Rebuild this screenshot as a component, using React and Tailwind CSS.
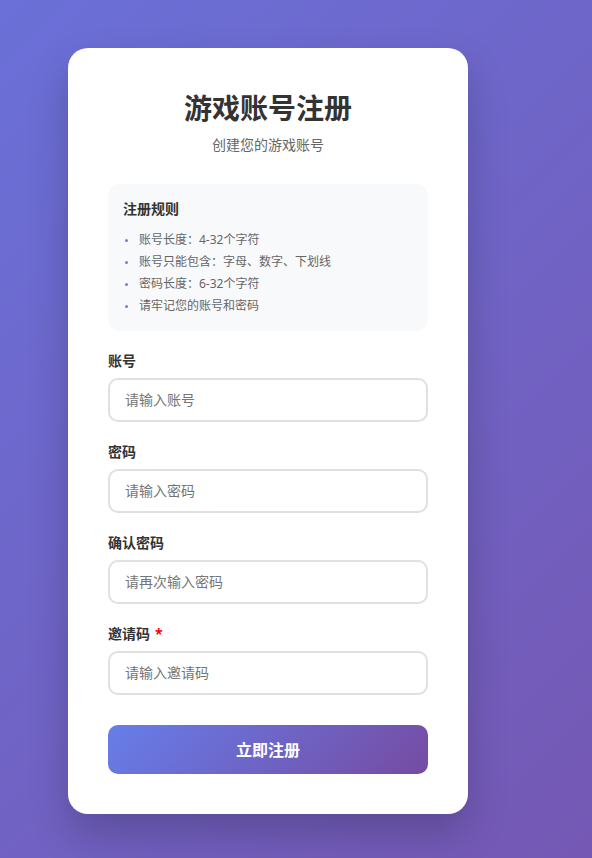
import React, { useState } from 'react';

const rules = [
  "账号长度：4-32个字符",
  "账号只能包含：字母、数字、下划线",
  "密码长度：6-32个字符",
  "请牢记您的账号和密码"
];

const fields = [
  { label: "账号", placeholder: "请输入账号", type: "text" },
  { label: "密码", placeholder: "请输入密码", type: "password" },
  { label: "确认密码", placeholder: "请再次输入密码", type: "password" },
  { label: "邀请码", placeholder: "请输入邀请码", type: "text", required: true },
];

export default function App() {
  const [values, setValues] = useState({});

  return (
    <div
      className="min-h-screen bg-[linear-gradient(135deg,#6a70d8,#7558b4)] pt-[48px] pl-[68px] pb-[44px]"
      style={{ fontFamily: '"Noto Sans", "Noto Sans CJK SC", sans-serif' }}
    >
      <div className="w-[400px] bg-white rounded-[20px] p-[40px] shadow-[0_20px_40px_rgba(0,0,0,0.2)]">
        {/* Header */}
        <h1 className="text-[28px] leading-[40px] font-bold text-[#333] text-center">游戏账号注册</h1>
        <p className="mt-[7px] text-[14px] leading-[20px] text-[#666] text-center">创建您的游戏账号</p>

        {/* Rules */}
        <div className="mt-[29px] bg-[#f8f9fa] rounded-[12px] pt-[15px] px-[15px] pb-[14px]">
          <h3 className="text-[14px] leading-[20px] font-bold text-[#333]">注册规则</h3>
          <ul className="mt-[10px]">
            {rules.map((rule, i) => (
              <li key={i} className="flex items-center text-[12px] leading-[22px] text-[#666]">
                <span className="w-[3px] h-[3px] rounded-full bg-[#667eea] ml-[2px] mr-[11px]"></span>
                {rule}
              </li>
            ))}
          </ul>
        </div>

        {/* Form */}
        <form className="mt-[20px]" onSubmit={(e) => e.preventDefault()}>
          {fields.map((f, i) => (
            <div key={i} className="mb-[20px]">
              <label className="block text-[14px] leading-[20px] font-bold text-[#333] mb-[7px]">
                {f.label}
                {f.required && <span className="text-[#ff0000] ml-[5px]">*</span>}
              </label>
              <input
                type={f.type}
                value={values[i] || ''}
                onChange={(e) => setValues({ ...values, [i]: e.target.value })}
                placeholder={f.placeholder}
                className="block w-full h-[44px] px-[15px] pb-[2px] border-2 border-[#e0e0e0] rounded-[10px] text-[14px] text-[#333] placeholder:text-[#757575] outline-none"
              />
            </div>
          ))}
          <button
            type="submit"
            className="mt-[10px] w-full h-[49px] rounded-[10px] bg-[linear-gradient(135deg,#667eea,#764ba2)] text-white text-[16px] font-bold"
          >
            立即注册
          </button>
        </form>
      </div>
    </div>
  );
}
